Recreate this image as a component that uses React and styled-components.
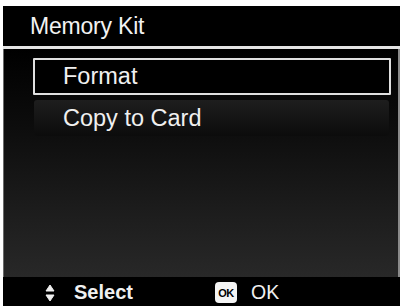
import React from "react";
import styled, { createGlobalStyle } from "styled-components";

const Global = createGlobalStyle`
  html, body { margin: 0; padding: 0; background: #ffffff; }
  body { font-family: "Liberation Sans", Arial, sans-serif; }
`;

const Screen = styled.div`
  width: 397px;
  height: 300px;
  margin: 6px 0 0 3px;
  display: flex;
  flex-direction: column;
  background: #000;
`;

const Header = styled.div`
  height: 40px;
  display: flex;
  align-items: center;
  padding-left: 27px;
  background: #000;
  color: #f2f2f2;
  font-size: 23px;
  letter-spacing: -0.2px;
  border-bottom: 3px solid #e4e4e4;
  box-sizing: border-box;
  height: 43px;
`;

const Content = styled.div`
  flex: 1;
  display: flex;
  flex-direction: column;
  gap: 5px;
  padding: 9px 7px 0 29px;
  background: linear-gradient(to bottom, #000 0%, #0d0d0d 35%, #1c1c1c 70%, #282828 100%);
  border-left: 1px solid #6a6a6a;
  border-right: 2px solid #8a8a8a;
  box-sizing: border-box;
`;

const Item = styled.div`
  height: ${(p) => (p.$selected ? "37px" : "36px")};
  box-sizing: border-box;
  display: flex;
  align-items: center;
  padding-left: ${(p) => (p.$selected ? "28px" : "29px")};
  color: #f0f0f0;
  font-size: 23.5px;
  border: ${(p) => (p.$selected ? "2px solid #e0e0e0" : "none")};
  border-radius: ${(p) => (p.$selected ? "1px" : "3px")};
  background: ${(p) =>
    p.$selected
      ? "#000"
      : "linear-gradient(to bottom, #1e1e1e 0%, #151515 50%, #0c0c0c 100%)"};
  margin-right: ${(p) => (p.$selected ? "0" : "2px")};
  margin-left: ${(p) => (p.$selected ? "0" : "1px")};
`;

const Footer = styled.div`
  height: 29px;
  flex-shrink: 0;
  display: flex;
  align-items: center;
  background: #000;
  color: #f0f0f0;
  padding-left: 42px;
  padding-top: 2px;
  box-sizing: border-box;
`;

const Hint = styled.div`
  display: flex;
  align-items: center;
  gap: ${(p) => p.$gap || "10px"};
  width: ${(p) => p.$width || "auto"};
  font-size: ${(p) => p.$size || "20px"};
  font-weight: ${(p) => (p.$bold ? 700 : 400)};
`;

const OkBadge = styled.span`
  width: 22px;
  height: 21px;
  border-radius: 4px;
  background: #f4f4f4;
  color: #000;
  font-size: 11px;
  font-weight: 700;
  display: flex;
  align-items: center;
  justify-content: center;
  letter-spacing: -0.5px;
`;

const UpDown = () => (
  <svg width="10" height="20" viewBox="0 0 10 20">
    <path d="M5 2 L9 8 L1 8 Z" fill="#f0f0f0" stroke="#f0f0f0" strokeWidth="1" strokeLinejoin="round" />
    <path d="M5 18 L9 12 L1 12 Z" fill="#f0f0f0" stroke="#f0f0f0" strokeWidth="1" strokeLinejoin="round" />
  </svg>
);

export default function App() {
  return (
    <>
      <Global />
      <Screen>
        <Header>Memory Kit</Header>
        <Content>
          <Item $selected>Format</Item>
          <Item>Copy to Card</Item>
        </Content>
        <Footer>
          <Hint $bold $gap="19px" $width="170px">
            <UpDown />
            Select
          </Hint>
          <Hint $gap="14px" $size="19.5px">
            <OkBadge>OK</OkBadge>
            OK
          </Hint>
        </Footer>
      </Screen>
    </>
  );
}
